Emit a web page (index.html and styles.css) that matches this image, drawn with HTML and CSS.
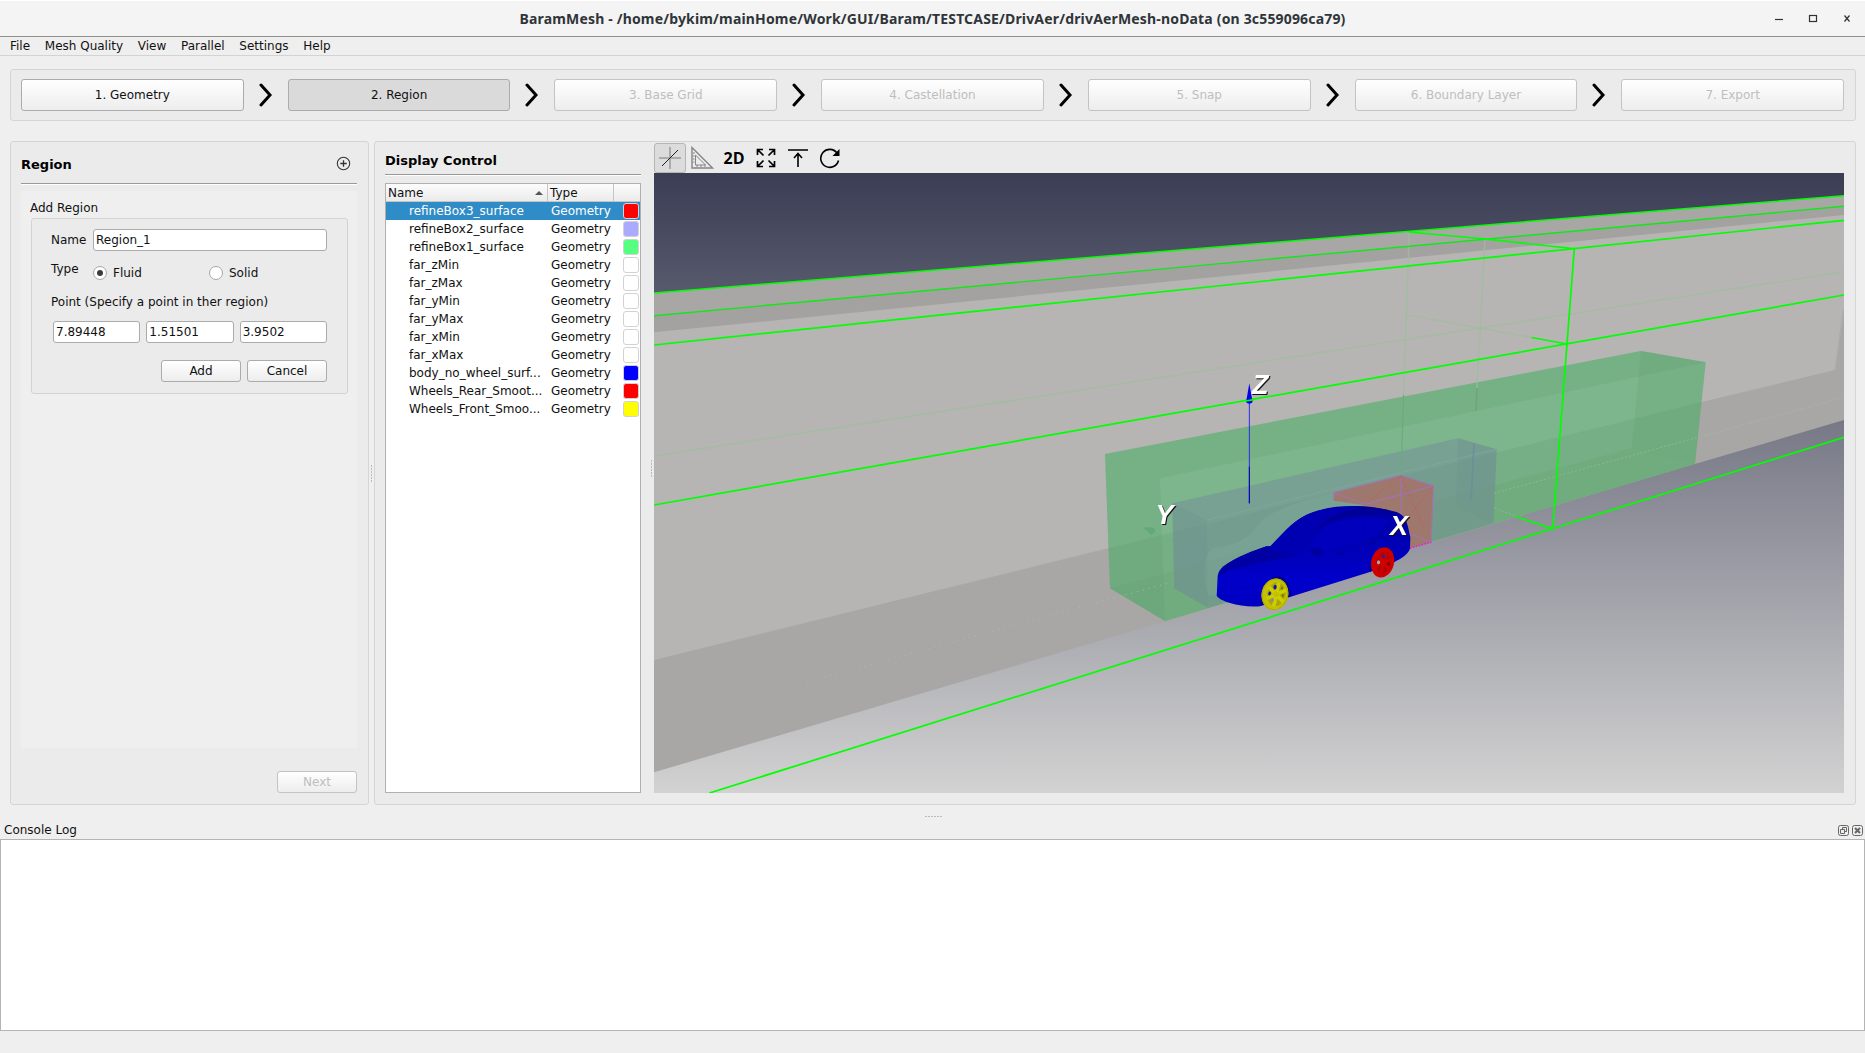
FILE: index.html
```html
<!DOCTYPE html>
<html lang="en">
<head>
<meta charset="utf-8">
<title>BaramMesh</title>
<link rel="stylesheet" href="styles.css">
</head>
<body>
<header class="titlebar">
  <h1 class="window-title">BaramMesh - /home/bykim/mainHome/Work/GUI/Baram/TESTCASE/DrivAer/drivAerMesh-noData (on 3c559096ca79)</h1>
  <svg class="window-buttons" width="80" height="14" viewBox="0 0 80 14" fill="none" stroke="#2d3235">
    <path d="M0 7.5h8" stroke-width="1.2"/>
    <rect x="34.5" y="3.5" width="7" height="6" stroke-width="1.2"/>
    <path d="M69.500 3.500l5 6M74.500 3.500l-5 6" stroke-width="1.2"/>
  </svg>
</header>
<nav class="menubar"><span>File</span><span>Mesh Quality</span><span>View</span><span>Parallel</span><span>Settings</span><span>Help</span></nav>

<section class="steps">
  <button class="btn step">1. Geometry</button>
  <svg class="chevron" viewBox="0 0 14 24"><path d="M2 2l9 10-9 10"/></svg>
  <button class="btn step current">2. Region</button>
  <svg class="chevron" viewBox="0 0 14 24"><path d="M2 2l9 10-9 10"/></svg>
  <button class="btn step off">3. Base Grid</button>
  <svg class="chevron" viewBox="0 0 14 24"><path d="M2 2l9 10-9 10"/></svg>
  <button class="btn step off">4. Castellation</button>
  <svg class="chevron" viewBox="0 0 14 24"><path d="M2 2l9 10-9 10"/></svg>
  <button class="btn step off">5. Snap</button>
  <svg class="chevron" viewBox="0 0 14 24"><path d="M2 2l9 10-9 10"/></svg>
  <button class="btn step off">6. Boundary Layer</button>
  <svg class="chevron" viewBox="0 0 14 24"><path d="M2 2l9 10-9 10"/></svg>
  <button class="btn step off">7. Export</button>
</section>

<main class="work">
  <section class="panel region">
    <div class="region-head">
      <h2>Region</h2>
      <svg width="15" height="15" viewBox="0 0 15 15" fill="none" stroke="#333"><circle cx="7.5" cy="7.5" r="6.2" stroke-width="1.1"/><path d="M7.5 4.3v6.4M4.3 7.5h6.4" stroke-width="1.3"/></svg>
    </div>
    <div class="scroll">
      <div class="group-title">Add Region</div>
      <div class="group">
        <div class="row name-row"><label>Name</label><div class="field">Region_1</div></div>
        <div class="row type-row"><label>Type</label><span class="radio on"></span><span class="opt">Fluid</span><span class="radio"></span><span class="opt">Solid</span></div>
        <div class="point-label">Point (Specify a point in ther region)</div>
        <div class="row points"><div class="field">7.89448</div><div class="field">1.51501</div><div class="field">3.9502</div></div>
        <div class="row actions"><button class="btn small">Add</button><button class="btn small">Cancel</button></div>
      </div>
    </div>
    <button class="btn small off next">Next</button>
  </section>

  <div class="grip vertical"></div>

  <section class="panel display">
    <div class="control">
      <h2>Display Control</h2>
      <div class="tree">
        <div class="tr head"><span class="name">Name<i class="sort"></i></span><span class="type">Type</span><span class="col"></span></div>
        <div class="tr selected"><span class="name">refineBox3_surface</span><span class="type">Geometry</span><i class="swatch red"></i></div>
        <div class="tr"><span class="name">refineBox2_surface</span><span class="type">Geometry</span><i class="swatch lilac"></i></div>
        <div class="tr"><span class="name">refineBox1_surface</span><span class="type">Geometry</span><i class="swatch green"></i></div>
        <div class="tr"><span class="name">far_zMin</span><span class="type">Geometry</span><i class="swatch"></i></div>
        <div class="tr"><span class="name">far_zMax</span><span class="type">Geometry</span><i class="swatch"></i></div>
        <div class="tr"><span class="name">far_yMin</span><span class="type">Geometry</span><i class="swatch"></i></div>
        <div class="tr"><span class="name">far_yMax</span><span class="type">Geometry</span><i class="swatch"></i></div>
        <div class="tr"><span class="name">far_xMin</span><span class="type">Geometry</span><i class="swatch"></i></div>
        <div class="tr"><span class="name">far_xMax</span><span class="type">Geometry</span><i class="swatch"></i></div>
        <div class="tr"><span class="name">body_no_wheel_surf...</span><span class="type">Geometry</span><i class="swatch blue"></i></div>
        <div class="tr"><span class="name">Wheels_Rear_Smoot...</span><span class="type">Geometry</span><i class="swatch red"></i></div>
        <div class="tr"><span class="name">Wheels_Front_Smoo...</span><span class="type">Geometry</span><i class="swatch yellow"></i></div>
      </div>
    </div>
    <div class="grip vertical inner"></div>
    <div class="view">
      <div class="toolbar">
        <span class="tool pressed"><svg width="24" height="24" viewBox="0 0 24 24" fill="none"><path d="M12 1v22M1 12h22" stroke="#aaa" stroke-width="2"/><path d="M4 20L20 4" stroke="#222"/></svg></span>
        <span class="tool"><svg width="24" height="24" viewBox="0 0 24 24" fill="none" stroke="#858585"><path d="M2 1.500v20.500h20.500z" stroke-width="1.400"/><path d="M5.500 9v10h10z" /><path d="M3 7h2M3 10h1.500M3 13h1.500M3 16h1.500M7 21v-2M11 21v-2M15 21v-2"/></svg></span>
        <span class="tool two-d">2D</span>
        <span class="tool"><svg width="20" height="20" viewBox="0 0 20 20" fill="none" stroke="#000" stroke-width="1.700"><path d="M1.500 7V1.500H7M13 1.500h5.500V7M18.500 13v5.500H13M7 18.500H1.500V13M1.500 1.500l6 6M18.500 1.500l-6 6M18.500 18.500l-6-6M1.500 18.500l6-6"/></svg></span>
        <span class="tool"><svg width="20" height="20" viewBox="0 0 20 20" fill="none" stroke="#000" stroke-width="1.600"><path d="M0 2h20M10 19V6M6 10l4-4.500L14 10"/></svg></span>
        <span class="tool"><svg width="22" height="22" viewBox="0 0 22 22" fill="none" stroke="#000" stroke-width="1.600"><path d="M19.500 13.500A9 9 0 1 1 18 6"/><path d="M20.500 2v7h-7z" fill="#000" stroke="none"/></svg></span>
      </div>
      <svg class="scene" width="1190" height="620" viewBox="654 173 1190 620">
        <defs>
          <linearGradient id="sky" x1="0" y1="0" x2="0" y2="1"><stop offset="0" stop-color="#3a3d54"/><stop offset="1" stop-color="#d2d2d2"/></linearGradient>
          <linearGradient id="paint" x1="0" y1="0" x2="0" y2="1"><stop offset="0" stop-color="#0000a6"/><stop offset=".45" stop-color="#0000b8"/><stop offset=".75" stop-color="#0000cc"/><stop offset="1" stop-color="#0000c0"/></linearGradient>
        </defs>
        <rect x="654" y="173" width="1190" height="620" fill="url(#sky)"/>
        <!-- wind tunnel walls -->
        <path d="M654 293L1844 195.700V420L1695 464L1164.500 621.700L654 772.300z" fill="#a9a7a5"/>
        <path d="M654 315.700L1844 206.300V215L654 332.300z" fill="#a4a2a0"/>
        <path d="M654 332.300L1844 215V310L1835 370L1702.700 401.700L1060.400 560L654 660z" fill="#b6b5b3"/>
        <!-- refinement boxes -->
        <path d="M1105 454L1641 351L1705.700 362.300L1695 464L1165 621L1110 588.300z" fill="#43b765" fill-opacity=".5"/>
        <path d="M1105 454L1641 351L1705.700 362.300L1160 478.300L1165 621L1110 588.300z" fill="#5a9a6a" fill-opacity=".18"/>
        <path d="M1641 351L1705.700 362.300L1695 464L1631.700 448.300z" fill="#5a9a6a" fill-opacity=".2"/>
        <path d="M1110 588.300L1631.700 448.300L1695 464L1165 621z" fill="#5fa26b" fill-opacity=".2"/>
        <path d="M1172.300 503.300L1458.300 438.300L1496.700 449.300L1493.300 523.300L1208 607.700L1174.300 588.300z" fill="#74879a" fill-opacity=".46"/>
        <path d="M1172.300 503.300L1206.700 520L1208 607.700L1174.300 588.300zM1458.300 438.300L1496.700 449.300L1493.300 523.300L1455.700 505z" fill="#6a8a8c" fill-opacity=".2"/>
        <path d="M1206.700 520L1496.700 449.300" stroke="#80a69a" fill="none"/>
        <path d="M1474 443L1471 500" stroke="#6d8d9b" stroke-width="1.500"/>
        <path d="M1208 595C1202 575 1204 555 1213 548C1245 545 1255 530 1262 520C1285 503 1330 492 1400 480V520L1260 600z" fill="#86b7a8" fill-opacity=".22"/>
        <path d="M1334 492.700L1401 475.700L1433.300 486L1431 542.300L1410 548.300L1363 505L1334 500.700z" fill="#9e786c"/>
        <g stroke="#a273a8" stroke-width="1.300" fill="none">
          <path d="M1334 500.700V492.700L1401 475.700L1433.300 486L1431 542.300L1401 530M1401 475.700V520M1334 493L1366 504L1433.300 486"/>
          <path d="M1410 548.300L1431 542.300" stroke="#f0f" stroke-dasharray="1.500 1.500"/>
          <path d="M1401 476L1366 504M1401 476L1425 530M1433 487L1405 520" stroke="#c05a60" stroke-width=".7" stroke-dasharray="3 2"/>
        </g>
        <!-- hidden edges of the tunnel -->
        <g fill="none" stroke="#9dbd9b" stroke-width="1.500">
          <path d="M654 456L1844 271.700M1406.700 314.700L1531 337.500" stroke-opacity=".75"/>
          <path d="M654 418.300L1844 255" stroke="#b3b7b1"/>
          <path d="M1409.300 231.700L1403.600 395M1485 239L1477 388" stroke-opacity=".75"/>
          <path d="M1403.600 395L1401 475" stroke="#6aab7b" stroke-width="1.200"/>
          <path d="M1477 388L1476 411" stroke="#6fa37a"/>
          <path d="M1835 370L1843 310" stroke="#abadaa" stroke-width="1"/>
          <path d="M807 682L1170 582.700" stroke="#a9bcae" stroke-width="1" stroke-dasharray="1 5"/>
          <path d="M1494 493.300L1704 435.700M1494 508L1516 516" stroke="#86bb94" stroke-width="1" stroke-dasharray="2 2"/>
          <path d="M1704 435.700L1844 397.300" stroke="#a3b9a6" stroke-width="1" stroke-dasharray="2 2"/>
        </g>
        <!-- tunnel outline -->
        <g fill="none" stroke="#0f0" stroke-width="1.700">
          <path d="M654 293L1844 195.700" stroke-width="1.500"/>
          <path d="M654 315.700L1844 206.300" stroke="#10e818" stroke-width="1.400"/>
          <path d="M654 345L1844 220.300M654 505L1844 295M709.400 793L1552.700 528.500L1844 437.300"/>
          <path d="M1409 232L1485 239L1574.300 248.700L1567 344L1552.700 528.500L1516 516.700M1531.500 337.500L1567 344"/>
        </g>
        <!-- car, drawn at three units per pixel -->
        <g transform="translate(1080 340) scale(.33333)">
          <path d="M410 767L413 708Q415 692 428 681C470 650 520 633 560 619L572 618C600 590 635 545 680 524C740 498 800 496 850 499C880 501 920 508 950 516C975 526 980 545 984 560L991 592L990 625C985 645 960 658 945 665L872 695L632 770L545 797C520 803 480 798 450 789C430 783 415 775 410 767z" fill="url(#paint)"/>
          <path d="M572 618C600 590 635 545 680 524C730 502 790 497 850 500C790 512 745 535 715 562C690 590 675 625 640 652C610 640 585 628 572 618z" fill="#0000b2"/>
          <path d="M850 500C900 502 950 514 966 528C930 522 870 522 810 530C760 538 735 553 712 572L722 556C750 530 790 510 850 500z" fill="#000098"/>
          <path d="M428 681C470 650 520 633 560 619L640 652C560 660 500 680 450 690L415 712z" fill="#0000a4"/>
          <path d="M692 622C700 590 720 565 760 548C830 527 890 530 930 542C900 575 880 592 850 602C790 618 740 630 692 640z" fill="#0000bd"/>
          <path d="M775 553L778 625M850 530L852 603" stroke="#0000b2" stroke-width="3" fill="none"/>
          <path d="M440 730Q470 748 530 740" stroke="#0000b8" stroke-width="3" fill="none"/>
          <path d="M690 630Q705 620 722 628Q732 636 724 644Q705 650 690 630zM770 640l22-5v7l-22 4zM868 608l18-4v7l-18 4z" fill="#00009a"/>
          <path d="M540 797Q540 730 590 708Q625 705 634 768z" fill="#000092"/>
          <path d="M868 695Q870 640 915 618Q945 625 946 662z" fill="#000092"/>
          <g transform="rotate(12 585 762)">
            <ellipse cx="585" cy="763" rx="40" ry="48" fill="#c4c200"/><ellipse cx="585" cy="763" rx="38" ry="46" fill="none" stroke="#adab00" stroke-width="3"/>
            <ellipse cx="589" cy="762" rx="27" ry="36" fill="#a9a708"/>
            <path d="M589 726V799M564 746L614 780M564 780L614 744" stroke="#cfcd00" stroke-width="11"/><circle cx="589" cy="762" r="8" fill="#c2c000"/>
            <ellipse cx="581" cy="742" rx="5" ry="7" fill="#1515b0"/><ellipse cx="569" cy="764" rx="4" ry="6" fill="#1515b0"/><ellipse cx="581" cy="782" rx="4" ry="6" fill="#8588a0"/>
            <ellipse cx="602" cy="741" rx="3" ry="5" fill="#77750c"/><ellipse cx="609" cy="762" rx="3" ry="5" fill="#77750c"/>
          </g>
          <g transform="rotate(14 908 667)">
            <ellipse cx="908" cy="667" rx="34" ry="46" fill="#cf0000"/><ellipse cx="911" cy="667" rx="22" ry="33" fill="#b00404"/>
            <path d="M911 635V700M892 652L930 682M892 682L930 652" stroke="#d00000" stroke-width="9"/>
            <ellipse cx="907" cy="649" rx="4" ry="6" fill="#2020b8"/><ellipse cx="896" cy="670" rx="5" ry="6" fill="#a9a4ac"/><ellipse cx="926" cy="667" rx="3" ry="5" fill="#6e0c0c"/>
          </g>
          <path d="M508 180V490" stroke="#2a2af0" stroke-width="3"/><path d="M508 380V490" stroke="#0000b4" stroke-width="3"/>
          <path d="M508 130L516 176Q522 190 508 191Q494 190 500 176z" fill="#00e"/>
          <path d="M496 183L522 179" stroke="#0f0" stroke-width="5"/>
          <path d="M190 563Q222 558 226 570Q222 580 214 584z" fill="#62a878"/><path d="M225 578L280 606" stroke="#6bb07f" stroke-width="3"/><path d="M280 606L380 655" stroke="#7594a0" stroke-width="2"/>
        </g>
        <g class="axis-label"><text x="1252" y="393.500">Z</text><text x="1155.500" y="523.500">Y</text><text x="1390" y="534.500">X</text></g>
      </svg>
    </div>
  </section>
</main>

<section class="dock">
  <div class="grip horizontal"></div>
  <div class="dock-head"><span>Console Log</span>
    <svg width="25" height="11" viewBox="0 0 25 11" fill="none" stroke="#666762"><rect x=".5" y=".5" width="10" height="10" rx="2"/><path d="M2.500 4.500h4v4h-4zM4.500 4.500v-2h4v4h-2"/><rect x="14.500" y=".5" width="10" height="10" rx="2"/><path d="M17 3l5 5M22 3l-5 5" stroke-width="2"/></svg>
  </div>
  <div class="console"></div>
</section>
</body>
</html>
```
FILE: styles.css
```css
* { box-sizing: border-box; }
body { margin: 0; height: 1053px; overflow: hidden; background: #efefef; color: #111; font: 12px/16px "DejaVu Sans", sans-serif; display: flex; flex-direction: column; }
h1, h2 { margin: 0; }
svg { display: block; flex: none; }

.titlebar { height: 37px; background: #f4f4f4; border-top: 1px solid #fff; border-bottom: 1px solid #8f9189; display: grid; grid-template-columns: 1fr auto 1fr; align-items: center; }
.window-title { grid-column: 2; font: bold 14px/20px "Noto Sans", sans-serif; letter-spacing: .17px; color: #30353a; white-space: nowrap; }
.window-buttons { justify-self: end; margin-right: 10px; }

.menubar { height: 19px; border-bottom: 1px solid #d3d3d3; display: flex; gap: 14.7px; padding: 1px 10px 0; }

.steps { height: 52px; margin: 13px 9px 0 10px; padding: 0 11px 0 10px; border: 1px solid #d5d5d5; border-radius: 3px; background: #ebebeb; display: flex; align-items: center; }
.btn { font: inherit; color: #111; padding: 0; border: 1px solid #ababab; border-radius: 3px; background: linear-gradient(#fff, #ededed); }
.step { flex: 1; height: 32px; }
.current { background: #dadada; }
.off { color: #bebebe; border-color: #c3c3c3; }
.chevron { width: 14px; height: 24px; margin: 0 15px; }
.chevron path { fill: none; stroke: #000; stroke-width: 3; stroke-linecap: round; }

.work { margin: 20px 9px 0 10px; height: 664px; display: flex; }
.panel { border: 1px solid #d5d5d5; border-radius: 3px; background: #ebebeb; }
h2 { font-size: 13px; line-height: 18px; color: #000; }
.region { width: 359px; padding: 9px 11px 11px 10px; display: flex; flex-direction: column; }
.region-head { height: 33px; border-bottom: 1px solid #999; box-shadow: 0 1px #fff; padding: 5px 6px 0 0; display: flex; justify-content: space-between; align-items: flex-start; }
.scroll { height: 557px; margin-top: 7px; background: #efefef; padding: 9px; }
.group-title { height: 18px; }
.group { width: 317px; height: 176px; margin-left: 1px; padding: 10px 20px 0 19px; border: 1px solid #d3d3d3; border-radius: 3px; background: #ebebeb; display: flex; flex-direction: column; }
.row { display: flex; }
.name-row label { width: 42px; padding-top: 3px; }
.field { flex: 1; height: 22px; padding: 2px; border: 1px solid #ababab; border-radius: 3px; background: #fff; }
.type-row { height: 26px; margin-top: 9px; align-items: center; }
.type-row label { width: 42px; align-self: flex-start; margin-top: 1px; }
.type-row .opt { width: 102px; padding-left: 6px; }
.radio { width: 14px; height: 14px; border: 1px solid #a8a8a8; border-radius: 50%; background: #fff; display: grid; place-items: center; flex: none; }
.on::before { content: ""; width: 6px; height: 6px; border-radius: 50%; background: #3c3c3c; }
.point-label { margin-top: 8px; }
.points { margin: 11px 0 0 2px; gap: 6px; }
.actions { margin-top: 17px; justify-content: flex-end; gap: 6px; }
.small { width: 80px; height: 22px; }
.next { margin: auto 0 0 auto; }

.grip { background-repeat: repeat-y; flex: none; }
.vertical { width: 5px; height: 17px; align-self: center; background: radial-gradient(circle at 2.5px 1px, #bbb 0 .8px, transparent 1px) 0 0 / 5px 3px; }
.display { flex: 1; display: flex; padding: 1px 11px 11px 10px; }
.control { width: 256px; padding-top: 9px; display: flex; flex-direction: column; }
.control h2 { height: 23px; border-bottom: 1px solid #999; box-shadow: 0 1px #fff; }
.tree { flex: 1; margin-top: 8px; border: 1px solid #b0b0b0; background: #fff; }
.tr { height: 18px; line-height: 18px; display: flex; align-items: center; }
.name { width: 162px; padding-left: 23px; white-space: nowrap; }
.type { width: 66px; padding-left: 3px; }
.head { background: linear-gradient(#fcfcfc, #ebebeb); border-bottom: 1px solid #c5c5c5; }
.head .name { padding: 0 4px 0 2px; border-right: 1px solid #c5c5c5; display: flex; justify-content: space-between; align-items: center; }
.head .type { padding-left: 2px; border-right: 1px solid #c5c5c5; }
.sort { border: 4px solid transparent; border-top: 0; border-bottom-color: #555; }
.selected { background: #308cc6; color: #fff; }
.swatch { width: 16px; height: 16px; margin-left: 9px; border: 1px solid #d2d2d2; border-radius: 3px; background: #fff; }
.red { background: #f00; }
.lilac { background: #aaf; }
.green { background: #55ff7f; }
.blue { background: #00f; }
.yellow { background: #ff0; }
.inner { margin: 0 0 0 8px; }
.view { width: 1190px; margin-left: auto; display: flex; flex-direction: column; }
.toolbar { height: 30px; display: flex; }
.tool { width: 32px; height: 30px; display: grid; place-items: center; }
.pressed { border: 1px solid #b5b5b5; border-radius: 3px; background: #dcdcdc; }
.two-d { font: bold 16px/20px "Open Sans", sans-serif; color: #000; }
.axis-label text { font: italic bold 27px "Liberation Sans", sans-serif; fill: #fff; filter: drop-shadow(1.500px 1.500px 0 #111); }

.dock { position: relative; }
.horizontal { position: absolute; left: 925px; top: 10px; width: 17px; height: 3px; background: radial-gradient(circle at 1px 1.500px, #bbb 0 .8px, transparent 1px) 0 0 / 3px 3px; }
.dock-head { height: 34px; padding: 16px 2px 0 4px; display: flex; justify-content: space-between; align-items: center; }
.console { height: 192px; border: 1px solid #b4b4b4; background: #fff; }
```
